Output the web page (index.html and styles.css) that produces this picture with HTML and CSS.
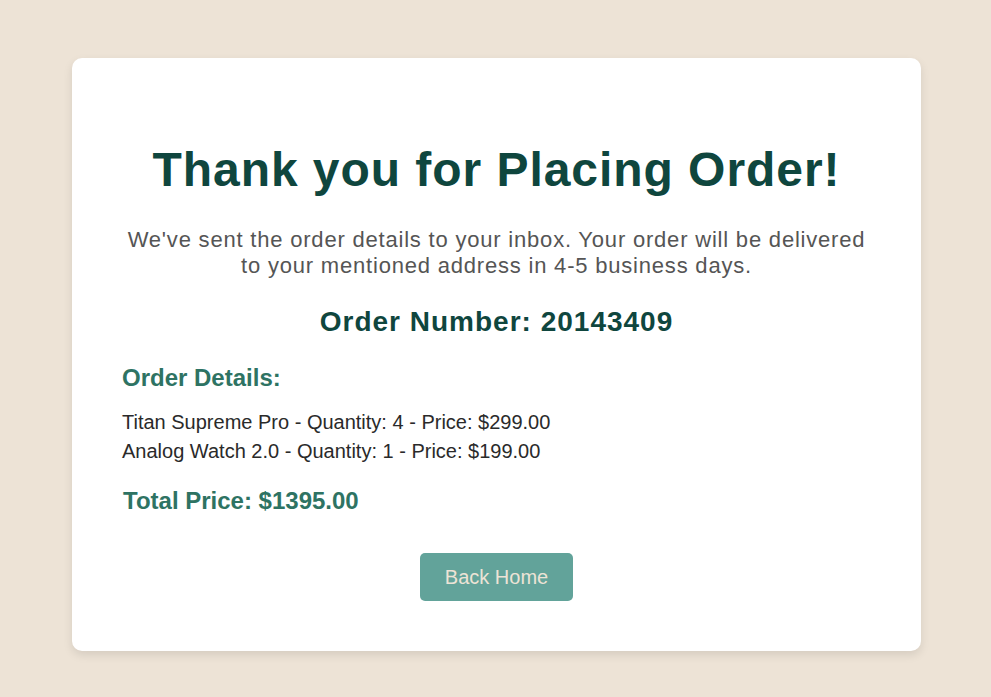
FILE: index.html
```html
<!DOCTYPE html>
<html lang="en">
<head>
<meta charset="utf-8">
<title>Order Confirmation</title>
<link rel="stylesheet" href="styles.css">
</head>
<body>
<main class="page">
  <section class="card">
    <h1 class="title">Thank you for Placing Order!</h1>
    <p class="lead">We've sent the order details to your inbox. Your order will be delivered to your mentioned address in 4-5 business days.</p>
    <h2 class="order-number">Order Number: 20143409</h2>
    <div class="details">
      <h3 class="details-title">Order Details:</h3>
      <ul class="items">
        <li>Titan Supreme Pro - Quantity: 4 - Price: $299.00</li>
        <li>Analog Watch 2.0 - Quantity: 1 - Price: $199.00</li>
      </ul>
      <h3 class="total">Total Price: $1395.00</h3>
    </div>
    <div class="actions">
      <button class="btn" type="button">Back Home</button>
    </div>
  </section>
</main>
</body>
</html>
```
FILE: styles.css
```css
* { box-sizing: border-box; }
html, body {
  margin: 0;
  padding: 0;
}
body {
  background: #ede3d6;
  font-family: "Liberation Sans", Arial, sans-serif;
  min-height: 697px;
}
.page {
  display: flex;
  justify-content: center;
  padding: 58px 0 0 2px;
}
.card {
  width: 849px;
  background: #ffffff;
  border-radius: 10px;
  box-shadow: 0 4px 10px rgba(0, 0, 0, 0.1);
  padding: 50px;
  text-align: center;
}
.title {
  font-size: 48px;
  letter-spacing: 0.95px;
  font-weight: bold;
  color: #0f463e;
  margin: 34px 0 30px;
}
.lead {
  font-size: 22px;
  letter-spacing: 0.8px;
  color: #555555;
  line-height: 26px;
  margin: 0 0 27px;
}
.order-number {
  font-size: 28px;
  letter-spacing: 1px;
  color: #0f463e;
  margin: 0 0 26px;
}
.details {
  text-align: left;
}
.details-title {
  font-size: 24px;
  color: #2e7363;
  margin: 0 0 16px;
}
.items {
  list-style: none;
  margin: 0 0 21px;
  padding: 0;
  font-size: 20px;
  color: #2a2a2a;
  line-height: 29px;
}
.total {
  font-size: 24px;
  color: #2e7363;
  margin: 0 0 0 1px;
}
.actions {
  display: flex;
  justify-content: center;
  margin-top: 38px;
}
.btn {
  font-family: "Liberation Sans", Arial, sans-serif;
  font-size: 20px;
  background: #62a39a;
  color: #ede3d6;
  border: none;
  border-radius: 5px;
  padding: 12px 25px;
  height: 48px;
  white-space: nowrap;
}
```
